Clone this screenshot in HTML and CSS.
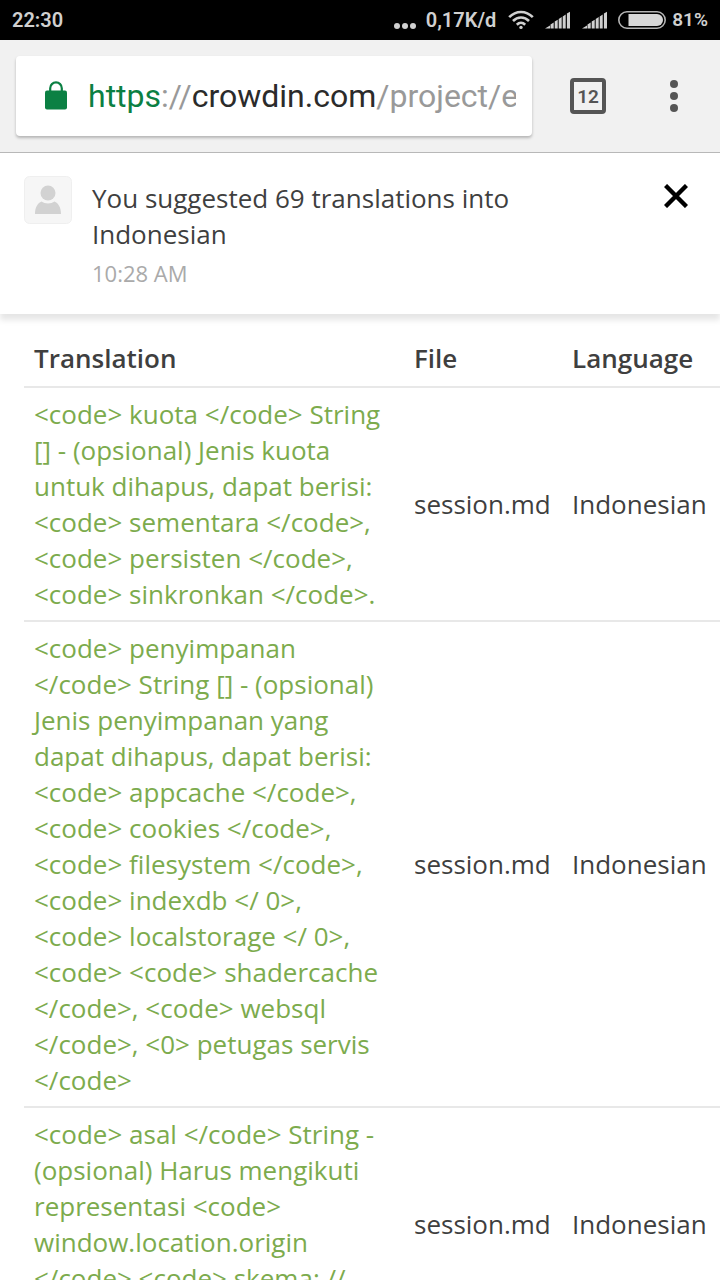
FILE: index.html
```
<!DOCTYPE html>
<html lang="en">
<head>
  <meta charset="UTF-8" />
  <meta name="viewport" content="width=device-width, initial-scale=1.0"/>
  <title>Translations</title>
  <link rel="stylesheet" href="styles.css">
</head>
<body>
  <div class="status-bar">
    <span class="clock">22:30</span>
    <span class="dots"><i></i><i></i><i></i></span>
    <span class="speed">0,17K/d</span>
    <svg class="wifi" width="26" height="20" viewBox="0 0 26 20" fill="none" stroke="#d0d0d0" stroke-width="2.6">
      <path d="M1.2 7.2C8 0.2 18 0.2 24.8 7.2"/>
      <path d="M5 11C9.6 6.4 16.4 6.4 21 11"/>
      <path d="M8.8 14.7C11.3 12.3 14.7 12.3 17.2 14.7"/>
      <circle cx="13" cy="17.4" r="1.7" fill="#d0d0d0" stroke="none"/>
    </svg>
    <svg class="signal" width="26" height="18" viewBox="0 0 26 18" fill="#d0d0d0">
      <path d="M0 17.5L5 14.500V17.500ZM5.500 13.500L8.700 11.500V17.500H5.500ZM9.700 10.500L12.700 8.700V17.500H9.700ZM13.700 8L16.700 6V17.500H13.700ZM17.700 5.500L20.700 3.600V17.500H17.700ZM21.900 2.500L25 0.800V17.500H21.900Z"/>
    </svg>
    <svg class="signal" width="26" height="18" viewBox="0 0 26 18" fill="#d0d0d0">
      <path d="M0 17.5L5 14.500V17.500ZM5.500 13.500L8.700 11.500V17.500H5.500ZM9.700 10.500L12.700 8.700V17.500H9.700ZM13.700 8L16.700 6V17.500H13.700ZM17.700 5.500L20.700 3.600V17.500H17.700ZM21.900 2.500L25 0.800V17.500H21.900Z"/>
    </svg>
    <svg class="battery" width="48" height="18" viewBox="0 0 48 18">
      <rect x="0.8" y="0.8" width="46.4" height="16.4" rx="8.2" fill="none" stroke="#b4b4b4" stroke-width="1.6"/>
      <path d="M10.500 3H39A6 6 0 0 1 39 15H10.500Z" fill="#d8d8d8"/>
    </svg>
    <span class="percent">81%</span>
  </div>

  <header class="toolbar">
    <div class="omnibox">
      <svg width="24" height="30" viewBox="0 0 24 30">
        <rect x="1" y="9.500" width="22" height="19" rx="2" fill="#0b8043"/>
        <path d="M6.200 11V7.200a5.800 5.800 0 0 1 11.600 0V11" fill="none" stroke="#0b8043" stroke-width="2.200"/>
      </svg>
      <div class="url" role="textbox" aria-label="Address" contenteditable="true" spellcheck="false"><span class="scheme">https</span>://<span class="host">crowdin.com</span>/project/e</div>
    </div>
    <button class="tabs" type="button" aria-label="Open tabs">12</button>
    <button class="menu" type="button" aria-label="Menu">
      <svg width="8" height="32" viewBox="0 0 8 32" fill="#555">
        <circle cx="4" cy="4" r="4"/>
        <circle cx="4" cy="16" r="4"/>
        <circle cx="4" cy="28" r="4"/>
      </svg>
    </button>
  </header>

  <section class="notice">
    <svg class="avatar" width="48" height="48" viewBox="0 0 48 48">
      <rect x="0.5" y="0.5" width="47" height="47" rx="5" fill="#f6f6f6" stroke="#efefef"/>
      <circle cx="24" cy="17" r="7.500" fill="#d2d2d2"/>
      <path d="M11 38C11 31 14 27 17.500 25.500C21 28 27 28 30.500 25.500C34 27 37 31 37 38Z" fill="#d2d2d2"/>
    </svg>
    <div class="notice-body">
      <p class="notice-text">You suggested 69 translations into Indonesian</p>
      <time class="notice-time">10:28 AM</time>
    </div>
    <button class="close" type="button" aria-label="Close">
      <svg width="24" height="24" viewBox="0 0 24 24" stroke="#000" stroke-width="4.4">
        <path d="M1.500 1.500L22.500 22.500M22.500 1.500L1.500 22.500"/>
      </svg>
    </button>
  </section>

  <main class="content">
    <table>
      <thead>
        <tr>
          <th>Translation</th>
          <th class="col-small">File</th>
          <th class="col-small">Language</th>
        </tr>
      </thead>
      <tbody>
        <tr>
          <td class="translation">&lt;code&gt; kuota &lt;/code&gt; String [] - (opsional) Jenis kuota untuk dihapus, dapat berisi: &lt;code&gt; sementara &lt;/code&gt;, &lt;code&gt; persisten &lt;/code&gt;, &lt;code&gt; sinkronkan &lt;/code&gt;.</td>
          <td>session.md</td>
          <td>Indonesian</td>
        </tr>
        <tr>
          <td class="translation">&lt;code&gt; penyimpanan &lt;/code&gt; String [] - (opsional) Jenis penyimpanan yang dapat dihapus, dapat berisi: &lt;code&gt; appcache &lt;/code&gt;, &lt;code&gt; cookies &lt;/code&gt;, &lt;code&gt; filesystem &lt;/code&gt;, &lt;code&gt; indexdb &lt;/ 0&gt;, &lt;code&gt; localstorage &lt;/ 0&gt;, &lt;code&gt; &lt;code&gt; shadercache &lt;/code&gt;, &lt;code&gt; websql &lt;/code&gt;, &lt;0&gt; petugas servis &lt;/code&gt;</td>
          <td>session.md</td>
          <td>Indonesian</td>
        </tr>
        <tr>
          <td class="translation">&lt;code&gt; asal &lt;/code&gt; String - (opsional) Harus mengikuti representasi &lt;code&gt; window.location.origin &lt;/code&gt; &lt;code&gt; skema: // host: port &lt;/code&gt;.</td>
          <td>session.md</td>
          <td>Indonesian</td>
        </tr>
      </tbody>
    </table>
  </main>
</body>
</html>
```
FILE: styles.css
```
* {
  box-sizing: border-box;
}

body {
  display: flex;
  flex-direction: column;
  height: 100vh;
  margin: 0;
  overflow: hidden;
  background-color: #fff;
  color: #3f3f3f;
  font-family: "Open Sans", sans-serif;
  font-size: 26px;
  line-height: 36px;
}

button {
  padding: 0;
  border: 0;
  background: none;
  cursor: pointer;
}

svg {
  display: block;
  flex: none;
}

/* phone status bar */
.status-bar {
  display: flex;
  flex: none;
  align-items: center;
  height: 40px;
  padding: 0 12px;
  background-color: #000;
  color: #d0d0d0;
  font-family: Roboto, sans-serif;
  font-size: 20px;
  font-weight: 600;
}

.clock {
  margin-right: auto;
}

.dots {
  display: flex;
  gap: 2px;
  padding-top: 11px;
}

.dots i {
  width: 6px;
  height: 6px;
  border-radius: 50%;
  background-color: #d0d0d0;
}

.speed {
  margin: 0 12px 0 10px;
}

.signal {
  margin-left: 11px;
}

.battery {
  margin: 0 6px 0 10px;
}

.percent {
  font-size: 19px;
}

/* browser toolbar */
.toolbar {
  display: flex;
  flex: none;
  align-items: center;
  height: 113px;
  padding: 0 16px;
  border-bottom: 1px solid #b8b8b8;
  background-color: #f1f1f1;
}

.omnibox {
  display: flex;
  flex: 1;
  align-items: center;
  gap: 20px;
  min-width: 0;
  height: 80px;
  padding: 0 16px 0 28px;
  border-radius: 4px;
  background-color: #fff;
  box-shadow: 0 2px 3px rgba(0, 0, 0, 0.25);
}

.url {
  flex: 1;
  min-width: 0;
  overflow: hidden;
  color: #999;
  font-family: Roboto, sans-serif;
  font-size: 32px;
  line-height: 40px;
  white-space: nowrap;
  outline: none;
}

.scheme {
  color: #0b8043;
}

.host {
  color: #2b2b2b;
}

.tabs {
  width: 36px;
  height: 36px;
  margin: 0 60px 0 38px;
  border: 4px solid #555;
  border-radius: 4px;
  color: #555;
  font-family: Roboto, sans-serif;
  font-size: 19px;
  font-weight: 600;
}

.menu {
  display: flex;
  justify-content: center;
  width: 16px;
  margin-right: 22px;
}

/* notification */
.notice {
  position: relative;
  display: flex;
  flex: none;
  align-items: flex-start;
  padding: 23px 30px 20px 24px;
  background-color: #fff;
  box-shadow: 0 6px 6px rgba(0, 0, 0, 0.1);
}

.notice-body {
  flex: 1;
  margin: 4px 60px 0 20px;
}

.notice-text {
  margin: 0;
}

.notice-time {
  display: block;
  padding: 3px 0;
  color: #aaa;
  font-size: 22px;
}

.close {
  margin-top: 8px;
  padding: 0 2px;
}

/* translations */
.content {
  flex: 1;
  min-height: 0;
  padding: 18px 0 0 24px;
  overflow-y: auto;
  scrollbar-width: none;
}

table {
  width: 100%;
  border-spacing: 0;
  table-layout: fixed;
}

th, td {
  padding: 8px 10px;
  text-align: left;
  vertical-align: middle;
}

th {
  padding-bottom: 10px;
  font-weight: 600;
}

td {
  border-top: 2px solid #e8e8e8;
}

.col-small {
  width: 158px;
}

.translation {
  color: #7cab4d;
}
```
